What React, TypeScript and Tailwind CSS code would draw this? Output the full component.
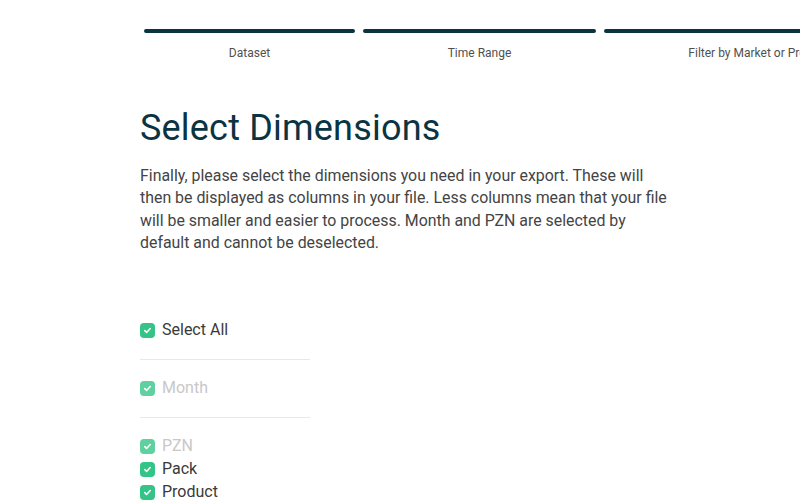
import React from "react";

const Check = ({ disabled }: { disabled?: boolean }) => (
  <span
    className={`flex h-[15px] w-[15px] shrink-0 items-center justify-center rounded-[4px] ${
      disabled ? "bg-[#5fd1a0]" : "bg-[#35c487]"
    }`}
  >
    <svg width="9" height="9" viewBox="0 0 10 10" fill="none">
      <path d="M2 5.2l2 2 4-4.4" stroke="#fff" strokeWidth="1.8" strokeLinecap="round" strokeLinejoin="round" />
    </svg>
  </span>
);

const Row = ({ label, disabled }: { label: string; disabled?: boolean }) => (
  <div className="flex h-[23px] items-center gap-[7px]">
    <Check disabled={disabled} />
    <span className={`text-[16px] ${disabled ? "text-[#c8c8c8]" : "text-[#3a3a3a]"}`}>{label}</span>
  </div>
);

export default function App() {
  const steps = [
    { label: "Dataset", w: "w-[211px]" },
    { label: "Time Range", w: "w-[233px]" },
    { label: "Filter by Market or Product", w: "w-[310px]" },
  ];
  return (
    <div className="h-[503px] w-[800px] overflow-hidden bg-white" style={{ fontFamily: "Roboto, 'Noto Sans', sans-serif" }}>
      <div className="flex gap-[8px] pl-[144px] pt-[29px]">
        {steps.map((s) => (
          <div key={s.label} className={`flex shrink-0 flex-col items-center ${s.w}`}>
            <div className="h-[4px] w-full rounded-full bg-[#0c3343]" />
            <div className="mt-[12px] whitespace-nowrap text-[12px] leading-[16px] text-[#505050]">{s.label}</div>
          </div>
        ))}
      </div>
      <div className="pl-[140px] pt-[45px]">
        <h1 className="text-[36px] font-normal leading-[44px] tracking-[0.2px] text-[#0b3443]">Select Dimensions</h1>
        <p className="mt-[15px] w-[528px] text-[15.9px] leading-[22.4px] text-[#444]">
          Finally, please select the dimensions you need in your export. These will then be displayed as columns in your file. Less columns mean that your file will be smaller and easier to process. Month and PZN are selected by default and cannot be deselected.
        </p>
        <div className="mt-[64px] w-[170px]">
          <Row label="Select All" />
          <div className="my-[17px] h-px w-full bg-[#e8e8e8]" />
          <Row label="Month" disabled />
          <div className="my-[17px] h-px w-full bg-[#e8e8e8]" />
          <Row label="PZN" disabled />
          <Row label="Pack" />
          <Row label="Product" />
        </div>
      </div>
    </div>
  );
}
